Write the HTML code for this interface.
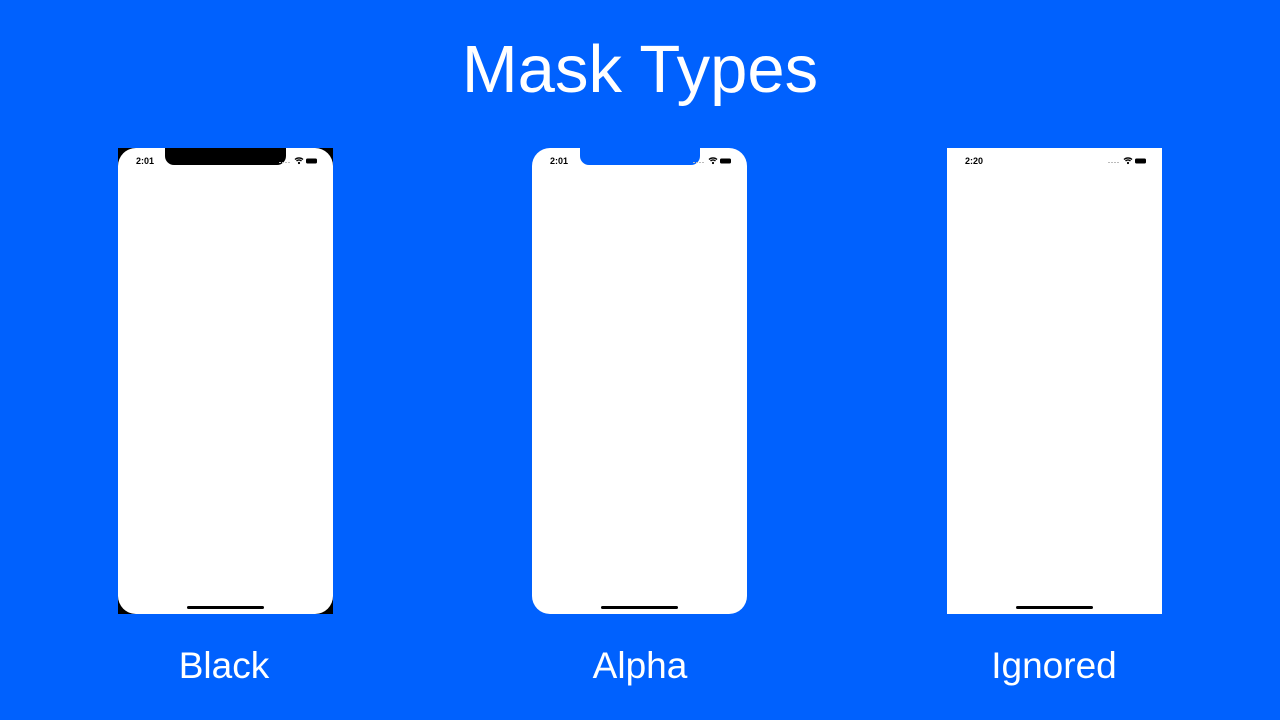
<!DOCTYPE html>
<html><head><style>
body{margin:0;width:1280px;height:720px;background:#0061fe;font-family:"Liberation Sans",sans-serif;position:relative;overflow:hidden}
.t{position:absolute;left:0;width:1280px;text-align:center;top:31px;font-size:67px;color:#fff}
.l{position:absolute;top:645px;font-size:37px;color:#fff;width:300px;text-align:center}
.p{position:absolute;top:148px;width:215px;height:466px;background:#fff}
.r{border-radius:18px}
.n{position:absolute;top:0;height:17px}
.time{position:absolute;left:18px;top:8px;font-size:9px;font-weight:bold;color:#000}
.hb{position:absolute;left:69px;bottom:5px;width:77px;height:3px;border-radius:2px;background:#000}
.st{position:absolute;right:10px;top:8px;width:46px;height:9px}
</style></head><body>
<div class="t">Mask Types</div>

<div style="position:absolute;left:118px;top:148px;width:215px;height:466px;background:#000"></div>
<div class="p r" style="left:118px"><div class="time">2:01</div>
<div class="n" style="left:47px;width:121px;background:#000;border-radius:0 0 9px 9px"></div>
<svg class="st" viewBox="0 0 46 9"><g fill="#bbb"><rect x="2" y="6" width="2" height="1"/><rect x="5" y="6" width="2" height="1"/><rect x="8" y="6" width="2" height="1"/><rect x="11" y="6" width="2" height="1"/></g><path d="M18 3.5a6 6 0 0 1 8 0M19.5 5a3.5 3.5 0 0 1 5 0" stroke="#000" stroke-width="1.4" fill="none"/><circle cx="22" cy="7" r="1.1" fill="#000"/><rect x="29" y="2.5" width="11" height="5" rx="1.5" fill="#000"/></svg>
<div class="hb"></div></div>

<div class="p r" style="left:532px"><div class="time">2:01</div>
<div class="n" style="left:48px;width:120px;background:#0061fe;border-radius:0 0 9px 9px"></div>
<svg class="st" viewBox="0 0 46 9"><g fill="#bbb"><rect x="2" y="6" width="2" height="1"/><rect x="5" y="6" width="2" height="1"/><rect x="8" y="6" width="2" height="1"/><rect x="11" y="6" width="2" height="1"/></g><path d="M18 3.5a6 6 0 0 1 8 0M19.5 5a3.5 3.5 0 0 1 5 0" stroke="#000" stroke-width="1.4" fill="none"/><circle cx="22" cy="7" r="1.1" fill="#000"/><rect x="29" y="2.5" width="11" height="5" rx="1.5" fill="#000"/></svg>
<div class="hb"></div></div>

<div class="p" style="left:947px"><div class="time">2:20</div>
<svg class="st" viewBox="0 0 46 9"><g fill="#bbb"><rect x="2" y="6" width="2" height="1"/><rect x="5" y="6" width="2" height="1"/><rect x="8" y="6" width="2" height="1"/><rect x="11" y="6" width="2" height="1"/></g><path d="M18 3.5a6 6 0 0 1 8 0M19.5 5a3.5 3.5 0 0 1 5 0" stroke="#000" stroke-width="1.4" fill="none"/><circle cx="22" cy="7" r="1.1" fill="#000"/><rect x="29" y="2.5" width="11" height="5" rx="1.5" fill="#000"/></svg>
<div class="hb"></div></div>

<div class="l" style="left:74px">Black</div>
<div class="l" style="left:490px">Alpha</div>
<div class="l" style="left:904px">Ignored</div>
</body></html>
